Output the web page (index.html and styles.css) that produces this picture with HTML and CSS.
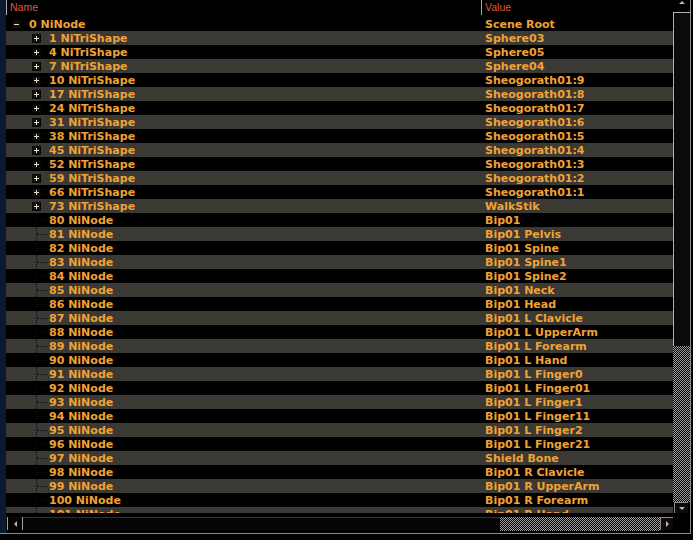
FILE: index.html
```html
<!DOCTYPE html>
<html>
<head>
<meta charset="utf-8">
<link rel="stylesheet" href="styles.css">
</head>
<body>
<div class="window">
  <div class="strip"></div>
  <div class="content">
    <div class="hdr">
      <div class="hc hc1">Name</div>
      <div class="hc hc2">Value</div>
    </div>
    <div class="rows">
      <div class="row"><div class="nc l0"><span class="exp"><span class="minus"></span></span>0 NiNode</div><div class="vc">Scene Root</div></div>
      <div class="row"><div class="nc l1"><span class="exp"><span class="plus"></span></span>1 NiTriShape</div><div class="vc">Sphere03</div></div>
      <div class="row"><div class="nc l1"><span class="exp"><span class="plus"></span></span>4 NiTriShape</div><div class="vc">Sphere05</div></div>
      <div class="row"><div class="nc l1"><span class="exp"><span class="plus"></span></span>7 NiTriShape</div><div class="vc">Sphere04</div></div>
      <div class="row"><div class="nc l1"><span class="exp"><span class="plus"></span></span>10 NiTriShape</div><div class="vc">Sheogorath01:9</div></div>
      <div class="row"><div class="nc l1"><span class="exp"><span class="plus"></span></span>17 NiTriShape</div><div class="vc">Sheogorath01:8</div></div>
      <div class="row"><div class="nc l1"><span class="exp"><span class="plus"></span></span>24 NiTriShape</div><div class="vc">Sheogorath01:7</div></div>
      <div class="row"><div class="nc l1"><span class="exp"><span class="plus"></span></span>31 NiTriShape</div><div class="vc">Sheogorath01:6</div></div>
      <div class="row"><div class="nc l1"><span class="exp"><span class="plus"></span></span>38 NiTriShape</div><div class="vc">Sheogorath01:5</div></div>
      <div class="row"><div class="nc l1"><span class="exp"><span class="plus"></span></span>45 NiTriShape</div><div class="vc">Sheogorath01:4</div></div>
      <div class="row"><div class="nc l1"><span class="exp"><span class="plus"></span></span>52 NiTriShape</div><div class="vc">Sheogorath01:3</div></div>
      <div class="row"><div class="nc l1"><span class="exp"><span class="plus"></span></span>59 NiTriShape</div><div class="vc">Sheogorath01:2</div></div>
      <div class="row"><div class="nc l1"><span class="exp"><span class="plus"></span></span>66 NiTriShape</div><div class="vc">Sheogorath01:1</div></div>
      <div class="row"><div class="nc l1"><span class="exp"><span class="plus"></span></span>73 NiTriShape</div><div class="vc">WalkStik</div></div>
      <div class="row"><div class="nc lf"><span class="tl"><span class="tlh"></span></span>80 NiNode</div><div class="vc">Bip01</div></div>
      <div class="row"><div class="nc lf"><span class="tl"><span class="tlh"></span></span>81 NiNode</div><div class="vc">Bip01 Pelvis</div></div>
      <div class="row"><div class="nc lf"><span class="tl"><span class="tlh"></span></span>82 NiNode</div><div class="vc">Bip01 Spine</div></div>
      <div class="row"><div class="nc lf"><span class="tl"><span class="tlh"></span></span>83 NiNode</div><div class="vc">Bip01 Spine1</div></div>
      <div class="row"><div class="nc lf"><span class="tl"><span class="tlh"></span></span>84 NiNode</div><div class="vc">Bip01 Spine2</div></div>
      <div class="row"><div class="nc lf"><span class="tl"><span class="tlh"></span></span>85 NiNode</div><div class="vc">Bip01 Neck</div></div>
      <div class="row"><div class="nc lf"><span class="tl"><span class="tlh"></span></span>86 NiNode</div><div class="vc">Bip01 Head</div></div>
      <div class="row"><div class="nc lf"><span class="tl"><span class="tlh"></span></span>87 NiNode</div><div class="vc">Bip01 L Clavicle</div></div>
      <div class="row"><div class="nc lf"><span class="tl"><span class="tlh"></span></span>88 NiNode</div><div class="vc">Bip01 L UpperArm</div></div>
      <div class="row"><div class="nc lf"><span class="tl"><span class="tlh"></span></span>89 NiNode</div><div class="vc">Bip01 L Forearm</div></div>
      <div class="row"><div class="nc lf"><span class="tl"><span class="tlh"></span></span>90 NiNode</div><div class="vc">Bip01 L Hand</div></div>
      <div class="row"><div class="nc lf"><span class="tl"><span class="tlh"></span></span>91 NiNode</div><div class="vc">Bip01 L Finger0</div></div>
      <div class="row"><div class="nc lf"><span class="tl"><span class="tlh"></span></span>92 NiNode</div><div class="vc">Bip01 L Finger01</div></div>
      <div class="row"><div class="nc lf"><span class="tl"><span class="tlh"></span></span>93 NiNode</div><div class="vc">Bip01 L Finger1</div></div>
      <div class="row"><div class="nc lf"><span class="tl"><span class="tlh"></span></span>94 NiNode</div><div class="vc">Bip01 L Finger11</div></div>
      <div class="row"><div class="nc lf"><span class="tl"><span class="tlh"></span></span>95 NiNode</div><div class="vc">Bip01 L Finger2</div></div>
      <div class="row"><div class="nc lf"><span class="tl"><span class="tlh"></span></span>96 NiNode</div><div class="vc">Bip01 L Finger21</div></div>
      <div class="row"><div class="nc lf"><span class="tl"><span class="tlh"></span></span>97 NiNode</div><div class="vc">Shield Bone</div></div>
      <div class="row"><div class="nc lf"><span class="tl"><span class="tlh"></span></span>98 NiNode</div><div class="vc">Bip01 R Clavicle</div></div>
      <div class="row"><div class="nc lf"><span class="tl"><span class="tlh"></span></span>99 NiNode</div><div class="vc">Bip01 R UpperArm</div></div>
      <div class="row"><div class="nc lf"><span class="tl"><span class="tlh"></span></span>100 NiNode</div><div class="vc">Bip01 R Forearm</div></div>
      <div class="row"><div class="nc lf"><span class="tl"><span class="tlh"></span></span>101 NiNode</div><div class="vc">Bip01 R Hand</div></div>
    </div>
    <div class="hs">
      <div class="hbtn hl"><span class="arr-l"></span></div>
      <div class="hthumb"></div>
      <div class="htrack"></div>
      <div class="hbtn hr"><span class="arr-r"></span></div>
    </div>
  </div>
  <div class="vs">
    <div class="vup"><span class="arr-u"></span></div>
    <div class="vthumb"></div>
    <div class="vtrack"></div>
    <div class="vdown"><span class="arr-d"></span></div>
    <div class="corner"></div>
  </div>
</div>
</body>
</html>
```

FILE: styles.css
```css
html, body {
  margin: 0;
  padding: 0;
  background: #000;
  width: 693px;
  height: 540px;
  overflow: hidden;
}

.window {
  box-sizing: border-box;
  width: 691px;
  height: 534px;
  display: flex;
  border-right: 1px solid #8c8c8c;
  border-bottom: 1px solid #8c8c8c;
  background: #000;
}

.strip {
  width: 6px;
  flex: none;
  background: #0c1a31;
}

.content {
  width: 667px;
  flex: none;
  display: flex;
  flex-direction: column;
}

.hdr {
  height: 17px;
  flex: none;
  display: flex;
  font-family: "Liberation Sans", Arial, sans-serif;
  font-size: 10.5px;
  color: #dc5a3c;
}

.hc {
  box-sizing: border-box;
  height: 15px;
  line-height: 14px;
  border-left: 1px solid #a8a8a8;
  padding-left: 3px;
}

.hc1 { width: 475px; }
.hc2 { flex: 1; }

.rows {
  height: 496px;
  flex: none;
  overflow: hidden;
  font-family: "DejaVu Sans", Verdana, sans-serif;
  font-weight: bold;
  font-size: 11px;
  color: #f0a234;
}

.row {
  box-sizing: border-box;
  height: 14px;
  display: flex;
  white-space: nowrap;
}

.row:nth-child(even) {
  background: #3b3934;
}

.nc {
  box-sizing: border-box;
  width: 475px;
  display: flex;
  align-items: stretch;
  line-height: 13px;
  padding-top: 1px;
}

.vc {
  flex: 1;
  line-height: 13px;
  padding-top: 1px;
  padding-left: 4px;
}

.l0 { padding-left: 6px; }
.l1 { padding-left: 26px; }
.lf { padding-left: 30px; }

.exp {
  box-sizing: border-box;
  width: 9px;
  height: 9px;
  margin-top: 2px;
  margin-right: 8px;
  background: #121212;
  border: 1px solid #070707;
  display: flex;
  align-items: center;
  justify-content: center;
  position: relative;
}

.l0 .exp { margin-right: 8px; }

.plus, .minus {
  position: relative;
  width: 5px;
  height: 1px;
  background: #e8dcc4;
}

.plus::after {
  content: "";
  position: absolute;
  left: 2px;
  top: -2px;
  width: 1px;
  height: 5px;
  background: #e8dcc4;
}

.tl {
  box-sizing: border-box;
  width: 13px;
  margin-top: -1px;
  border-left: 1px dotted #0e0e0e;
  display: flex;
  align-items: center;
}

.tlh {
  width: 10px;
  height: 0;
  border-top: 1px dotted #0e0e0e;
}

.hs {
  height: 20px;
  flex: none;
  box-sizing: border-box;
  padding-top: 4px;
  display: flex;
  align-items: flex-start;
}

.hbtn {
  box-sizing: border-box;
  height: 13px;
  display: flex;
  align-items: center;
  justify-content: center;
  background: #050505;
}

.hl {
  width: 16px;
  margin-left: 1px;
  border-left: 1px solid #a0a0a0;
  border-right: 1px solid #a0a0a0;
}

.hr {
  width: 13px;
  border-left: 1px solid #8c8c8c;
  border-top: 1px solid #8c8c8c;
  background: #0c0a0a;
}

.hthumb {
  box-sizing: border-box;
  width: 477px;
  height: 13px;
  border-top: 1px solid #333;
  background: #050505;
}

.htrack {
  flex: 1;
  height: 14px;
  background-image: repeating-conic-gradient(#9c9c9c 0 25%, #000 0 50%);
  background-size: 2px 2px;
}

.vs {
  width: 17px;
  flex: none;
  display: flex;
  flex-direction: column;
}

.vup {
  height: 12px;
  flex: none;
  display: flex;
  justify-content: center;
  padding-top: 1px;
  box-sizing: border-box;
}

.vthumb {
  box-sizing: border-box;
  height: 334px;
  flex: none;
  border-left: 1px solid #b0b0b0;
  border-top: 1px solid #b0b0b0;
  background: #0b0b0b;
}

.vtrack {
  flex: 1;
  background-image: repeating-conic-gradient(#9c9c9c 0 25%, #000 0 50%);
  background-size: 2px 2px;
}

.vdown {
  box-sizing: border-box;
  height: 11px;
  flex: none;
  margin-left: 1px;
  margin-right: 2px;
  border-left: 1px solid #8c8c8c;
  border-top: 1px solid #8c8c8c;
  background: #0c0a0a;
  display: flex;
  align-items: center;
  justify-content: center;
}

.corner {
  height: 20px;
  flex: none;
}

.arr-u {
  width: 0;
  height: 0;
  border-left: 3px solid transparent;
  border-right: 3px solid transparent;
  border-bottom: 3px solid #d2aaa2;
}

.arr-d {
  width: 0;
  height: 0;
  border-left: 3px solid transparent;
  border-right: 3px solid transparent;
  border-top: 3px solid #d2aaa2;
}

.arr-l {
  width: 0;
  height: 0;
  border-top: 3px solid transparent;
  border-bottom: 3px solid transparent;
  border-right: 3px solid #d2aaa2;
}

.arr-r {
  width: 0;
  height: 0;
  border-top: 3px solid transparent;
  border-bottom: 3px solid transparent;
  border-left: 3px solid #d2aaa2;
}
```
